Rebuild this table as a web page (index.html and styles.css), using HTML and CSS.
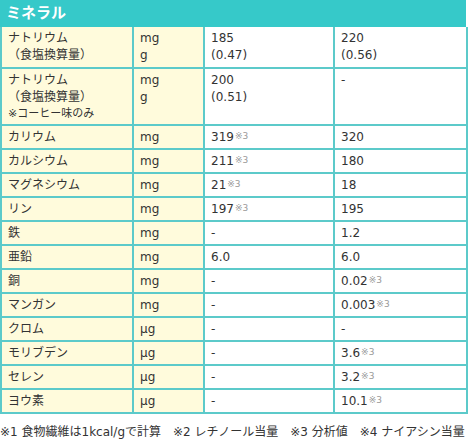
FILE: index.html
```html
<!DOCTYPE html>
<html lang="ja">
<head>
<meta charset="utf-8">
<link rel="stylesheet" href="styles.css">
</head>
<body>
<div class="wrap">
  <div class="head">ミネラル</div>
  <table class="tbl">
    <colgroup>
      <col class="c1"><col class="c2"><col class="c3"><col class="c4">
    </colgroup>
    <tr class="multi"><td class="name">ナトリウム<br>（食塩換算量）</td><td class="unit">mg<br>g</td><td>185<br>(0.47)</td><td>220<br>(0.56)</td></tr>
    <tr class="multi"><td class="name">ナトリウム<br>（食塩換算量）<span class="note">※コーヒー味のみ</span></td><td class="unit">mg<br>g</td><td>200<br>(0.51)</td><td>-</td></tr>
    <tr><td class="name">カリウム</td><td class="unit">mg</td><td>319<span class="ref">※3</span></td><td>320</td></tr>
    <tr><td class="name">カルシウム</td><td class="unit">mg</td><td>211<span class="ref">※3</span></td><td>180</td></tr>
    <tr><td class="name">マグネシウム</td><td class="unit">mg</td><td>21<span class="ref">※3</span></td><td>18</td></tr>
    <tr><td class="name">リン</td><td class="unit">mg</td><td>197<span class="ref">※3</span></td><td>195</td></tr>
    <tr><td class="name">鉄</td><td class="unit">mg</td><td>-</td><td>1.2</td></tr>
    <tr><td class="name">亜鉛</td><td class="unit">mg</td><td>6.0</td><td>6.0</td></tr>
    <tr><td class="name">銅</td><td class="unit">mg</td><td>-</td><td>0.02<span class="ref">※3</span></td></tr>
    <tr><td class="name">マンガン</td><td class="unit">mg</td><td>-</td><td>0.003<span class="ref">※3</span></td></tr>
    <tr><td class="name">クロム</td><td class="unit">μg</td><td>-</td><td>-</td></tr>
    <tr><td class="name">モリブデン</td><td class="unit">μg</td><td>-</td><td>3.6<span class="ref">※3</span></td></tr>
    <tr><td class="name">セレン</td><td class="unit">μg</td><td>-</td><td>3.2<span class="ref">※3</span></td></tr>
    <tr><td class="name">ヨウ素</td><td class="unit">μg</td><td>-</td><td>10.1<span class="ref">※3</span></td></tr>
  </table>
  <p class="foot">※1 食物繊維は1kcal/gで計算　※2 レチノール当量　※3 分析値　※4 ナイアシン当量</p>
</div>
</body>
</html>
```
FILE: styles.css
```css
html, body {
  margin: 0;
  padding: 0;
  background: #fff;
}
body {
  font-family: "DejaVu Sans", "Noto Sans CJK JP", sans-serif;
  font-size: 12px;
  color: #333;
}
.wrap {
  width: 466px;
}
.head {
  background: #36c9c9;
  color: #fff;
  font-weight: bold;
  font-size: 15px;
  height: 27px;
  line-height: 26px;
  padding-left: 6px;
}
.tbl {
  width: 466px;
  border-collapse: collapse;
  table-layout: fixed;
}
.c1 { width: 132px; }
.c2 { width: 71px; }
.c3 { width: 130px; }
.c4 { width: 133px; }
.tbl td {
  border: 2px solid #5ccaca;
  border-top: 0;
  padding: 3px 5px 3px 6px;
  height: 16px;
  line-height: 16px;
  vertical-align: top;
  background: #fff;
  overflow: hidden;
}
.tbl tr.multi td {
  line-height: 17px;
}
.tbl td.name, .tbl td.unit {
  background: #fffbdc;
}
.tbl .note {
  display: block;
  font-size: 11px;
  line-height: 15px;
}
.ref {
  font-size: 9px;
  line-height: 10px;
  color: #999;
  vertical-align: 2px;
  margin-left: 1px;
}
.foot {
  margin: 10px 0 0 0;
  line-height: 17px;
  white-space: nowrap;
}
```
